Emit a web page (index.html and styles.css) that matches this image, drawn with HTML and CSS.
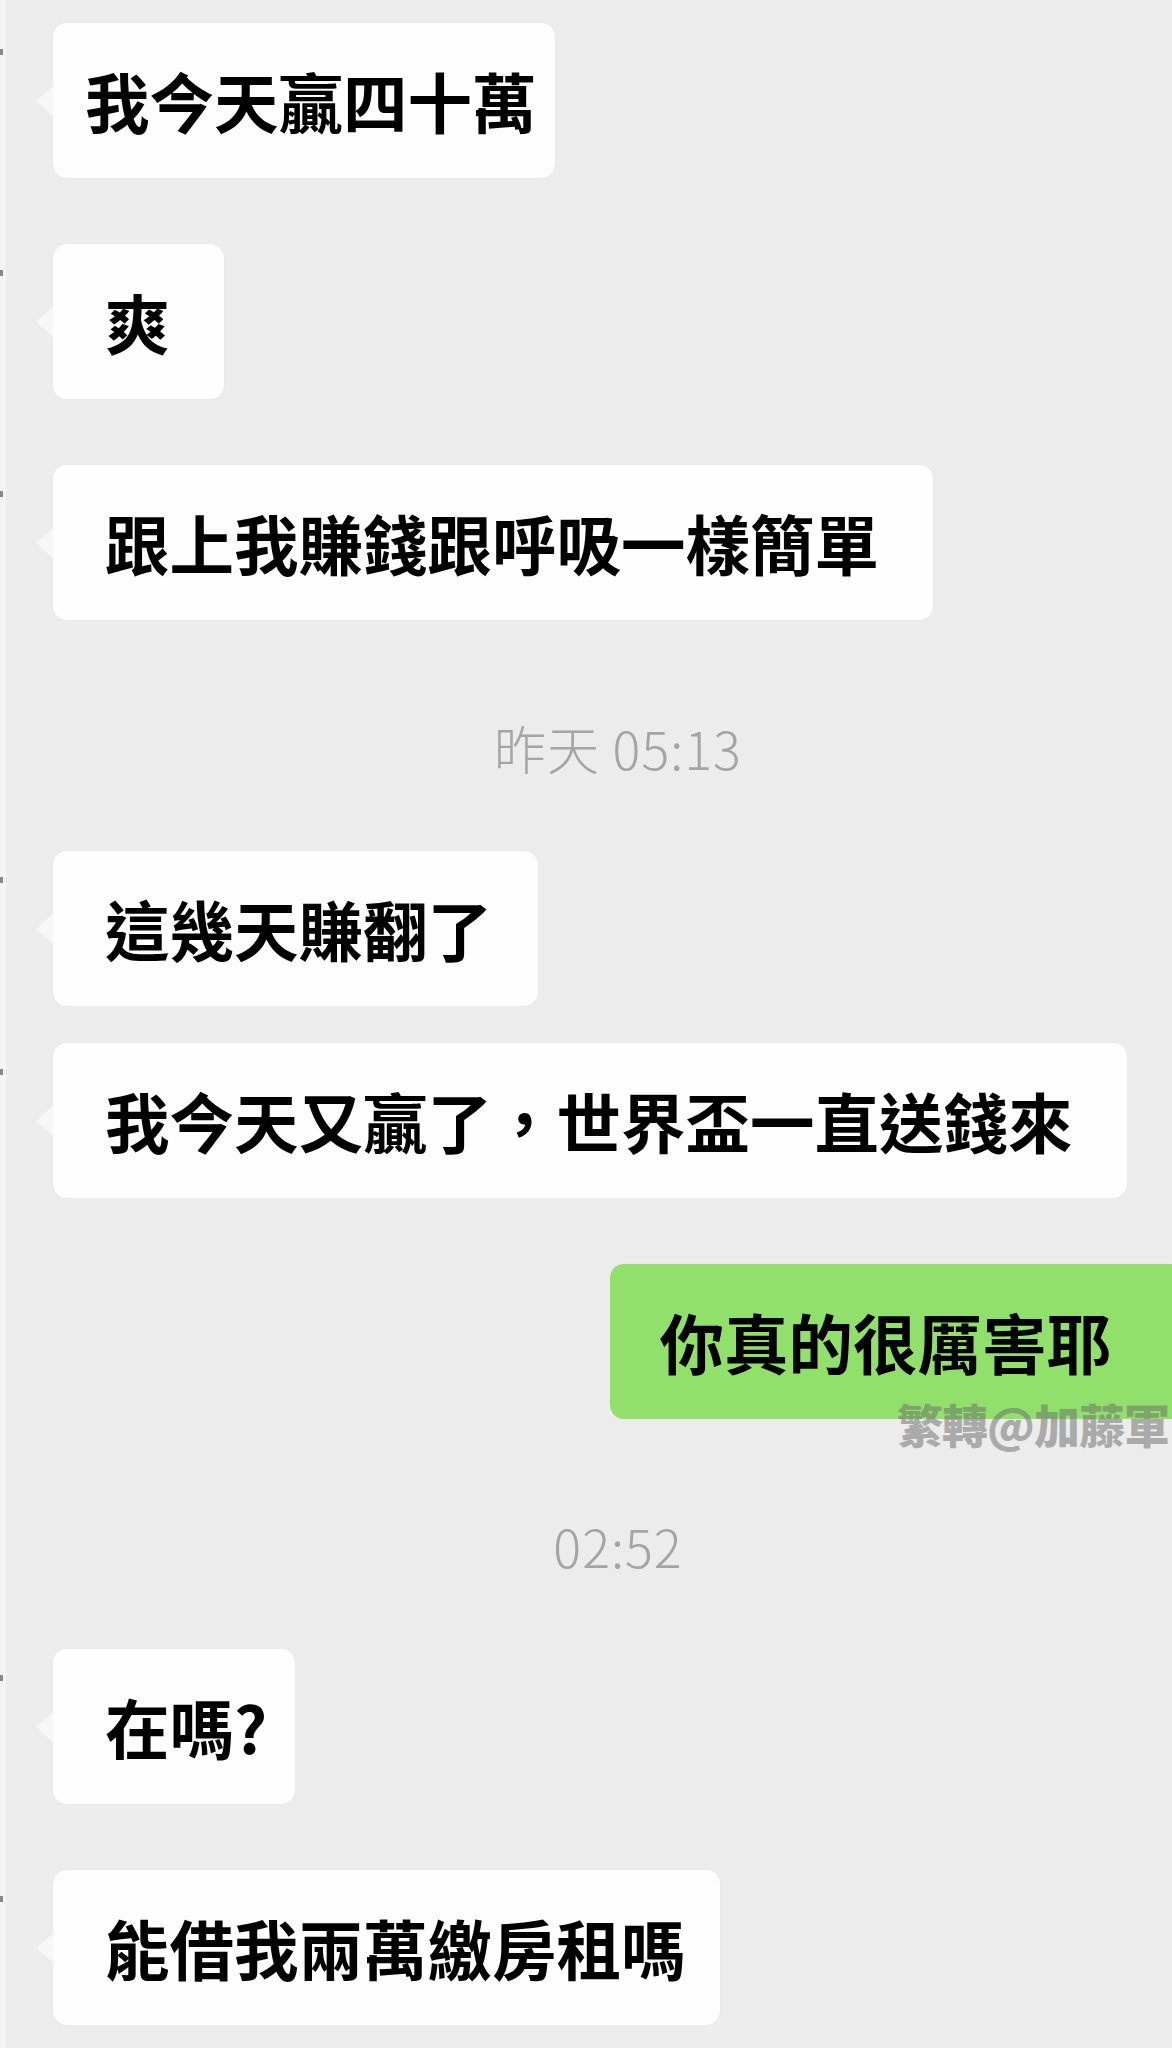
FILE: index.html
```html
<!DOCTYPE html>
<html lang="zh-Hant">
<head>
    <meta charset="UTF-8">
    <title>聊天記錄</title>
    <link rel="stylesheet" href="styles.css">
</head>
<body>
<div class="chat">
    <div class="row in"><div class="bubble first">我今天贏四十萬</div></div>
    <div class="row in"><div class="bubble">爽</div></div>
    <div class="row in"><div class="bubble">跟上我賺錢跟呼吸一樣簡單</div></div>

    <div class="time">昨天 05:13</div>

    <div class="row in"><div class="bubble mid">這幾天賺翻了</div></div>
    <div class="row in close"><div class="bubble">我今天又贏了，世界盃一直送錢來</div></div>
    <div class="row out">
        <div class="bubble green">你真的很厲害耶</div>
        <span class="watermark">繁轉@加藤軍</span>
    </div>

    <div class="time">02:52</div>

    <div class="row in"><div class="bubble short">在嗎?</div></div>
    <div class="row in"><div class="bubble snug">能借我兩萬繳房租嗎</div></div>
</div>
</body>
</html>
```

FILE: styles.css
```css
body {
    margin: 0;
    background: linear-gradient(to right, #f4f4f4 6px, #ececec 6px);
    font-family: "Noto Sans CJK TC", "Noto Sans", sans-serif;
    overflow: hidden;
}
.chat {
    display: flex;
    flex-direction: column;
    padding-top: 23px;
}
.row {
    position: relative;
    display: flex;
    margin-top: 66px;
}
.row:first-child {
    margin-top: 0;
}
.row.close {
    margin-top: 37px;
}
.row.in::before {
    content: "";
    position: absolute;
    left: 0;
    top: 26px;
    width: 3px;
    height: 6px;
    background: #888;
}
.row.out {
    justify-content: flex-end;
}
.bubble {
    position: relative;
    display: flex;
    align-items: center;
    height: 155px;
    margin-left: 53px;
    padding: 0 54px 0 52px;
    background: #fdfdfd;
    border-radius: 14px;
    color: #000;
    font-size: 64.5px;
    font-weight: 700;
    line-height: 1;
    white-space: nowrap;
    box-shadow: 0 0 2px rgba(0,0,0,0.04);
}
.bubble::before {
    content: "";
    position: absolute;
    left: -17px;
    top: 50%;
    margin-top: -15px;
    border-style: solid;
    border-width: 15px 17px 15px 0;
    border-color: transparent #f7f7f7 transparent transparent;
}
.bubble.first {
    padding: 0 18px 0 32px;
}
.bubble.mid {
    padding-right: 46px;
}
.bubble.short {
    padding-right: 28px;
}
.bubble.snug {
    padding-right: 34px;
}
.bubble.green {
    margin-left: 0;
    padding: 0 61px 0 49px;
    background: #92e06c;
    border-radius: 14px 0 0 14px;
}
.bubble.green::before {
    display: none;
}
.watermark {
    position: absolute;
    right: 3px;
    top: 134px;
    color: rgba(105,105,105,0.5);
    font-size: 46px;
    font-weight: 900;
    line-height: 1.1;
    letter-spacing: -1px;
}
.time {
    margin-top: 98px;
    padding-left: 64px;
    text-align: center;
    color: #a4a4a4;
    font-size: 52px;
    font-weight: 300;
    line-height: 60px;
    letter-spacing: 1px;
}
.time + .row {
    margin-top: 73px;
}
.row.out + .time {
    margin-top: 97px;
}
```
